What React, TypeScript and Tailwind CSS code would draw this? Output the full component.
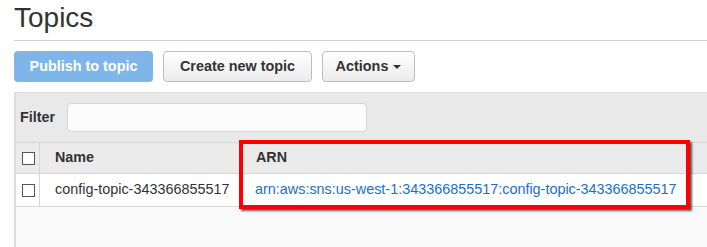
import React from "react";

export default function App() {
  return (
    <div className="relative h-[247px] w-[707px] overflow-hidden bg-white pl-[14px] text-[#333]" style={{ fontFamily: '"Liberation Sans", Arial, sans-serif' }}>
      <div className="flex h-[41px] items-start border-b border-[#d0d0d0]">
        <h1 className="mt-[1px] text-[28px] leading-[34px] font-normal text-[#333]">Topics</h1>
      </div>
      <div className="mt-[10px] flex gap-[10px]">
        <button className="h-[31px] w-[139px] rounded-[4px] bg-[#7fb6e9] text-[14.4px] font-bold text-white">Publish to topic</button>
        <button className="h-[31px] w-[149px] rounded-[4px] border border-[#bdbdbd] bg-gradient-to-b from-white to-[#ececec] text-[14.4px] font-bold text-[#333]">Create new topic</button>
        <button className="flex h-[31px] w-[93px] items-center justify-center gap-[5px] rounded-[4px] border border-[#bdbdbd] bg-gradient-to-b from-white to-[#ececec] text-[14.4px] font-bold text-[#333]">
          Actions
          <span className="inline-block h-0 w-0 border-x-[4px] border-t-[4px] border-x-transparent border-t-[#333]" />
        </button>
      </div>
      <div className="mt-[10px] border-l-2 border-t border-[#dcdcdc] bg-[#fafafa]">
        <div className="flex h-[49px] items-center gap-[12px] bg-[#e9e9e9] pl-[4px]">
          <span className="text-[14.3px] font-bold text-[#333]">Filter</span>
          <div className="h-[29px] w-[300px] rounded-[4px] border border-[#d6d6d6] bg-[#fbfbfb]" />
        </div>
        <div className="flex h-[32px] border-y border-[#d6d6d6] bg-[#ebebeb] text-[14.3px] font-bold">
          <div className="flex w-[24px] items-center justify-center border-r border-[#d6d6d6] pl-[2px]">
            <span className="block h-[13px] w-[13px] border border-[#555] bg-white" />
          </div>
          <div className="flex w-[201px] items-center border-r border-[#d6d6d6] pl-[15px]">Name</div>
          <div className="flex flex-1 items-center pl-[15px]">ARN</div>
        </div>
        <div className="flex h-[33px] border-b border-[#d6d6d6] bg-white text-[14.4px]">
          <div className="flex w-[24px] items-center justify-center border-r border-[#d6d6d6] pl-[2px]">
            <span className="block h-[13px] w-[13px] border border-[#555] bg-white" />
          </div>
          <div className="flex w-[201px] items-center border-r border-[#d6d6d6] pl-[15px]">config-topic-343366855517</div>
          <div className="flex flex-1 items-center pl-[14px] text-[#1a6fcb]">arn:aws:sns:us-west-1:343366855517:config-topic-343366855517</div>
        </div>
        <div className="h-[60px]" />
      </div>
      <div className="absolute left-[239px] top-[140px] h-[69px] w-[451px] border-[4px] border-[#ff0000] shadow-[2px_2px_2px_rgba(0,0,0,0.65)]" />
    </div>
  );
}
